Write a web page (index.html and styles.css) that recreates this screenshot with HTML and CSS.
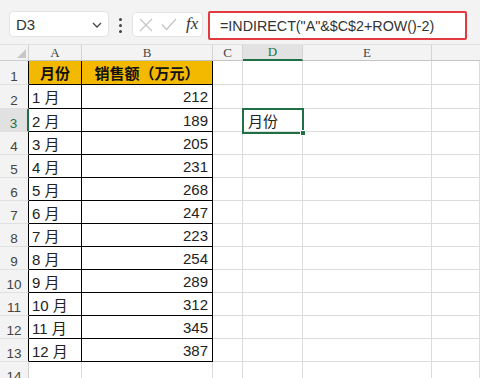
FILE: index.html
```html
<!DOCTYPE html>
<html lang="zh-CN">
<head>
<meta charset="utf-8">
<link rel="stylesheet" href="styles.css">
</head>
<body>
<div class="topbar">
  <div class="namebox">
    <span class="name">D3</span>
    <svg class="chev" width="10" height="6" viewBox="0 0 10 6"><path d="M1 1 L5 5 L9 1" fill="none" stroke="#444" stroke-width="1.3"/></svg>
  </div>
  <div class="dots"><i></i><i></i><i></i></div>
  <div class="fxbox">
    <svg width="14" height="14" viewBox="0 0 14 14"><path d="M1 1 L13 13 M13 1 L1 13" stroke="#c4c4c4" stroke-width="1.2" fill="none"/></svg>
    <svg width="16" height="13" viewBox="0 0 16 13"><path d="M1 6.5 L5.5 11.5 L15 1" stroke="#c4c4c4" stroke-width="1.2" fill="none"/></svg>
    <span class="fx">fx</span>
  </div>
  <div class="formula">=INDIRECT("A"&amp;$C$2+ROW()-2)</div>
</div>

<div class="sheet">
  <div class="c corner"><span class="tri"></span></div>
  <div class="c ch">A</div>
  <div class="c ch">B</div>
  <div class="c ch">C</div>
  <div class="c ch ch-sel">D</div>
  <div class="c ch">E</div>
  <div class="c ch ch-last"></div>

  <div class="c rh rh-t">1</div><div class="c t hd">月份</div><div class="c t hd">销售额（万元）</div><div class="c"></div><div class="c"></div><div class="c"></div><div class="c"></div>
  <div class="c rh rh-t">2</div><div class="c t">1 月</div><div class="c t num">212</div><div class="c"></div><div class="c"></div><div class="c"></div><div class="c"></div>
  <div class="c rh rh-sel">3</div><div class="c t">2 月</div><div class="c t num">189</div><div class="c"></div><div class="c sel-text">月份</div><div class="c"></div><div class="c"></div>
  <div class="c rh rh-t">4</div><div class="c t">3 月</div><div class="c t num">205</div><div class="c"></div><div class="c"></div><div class="c"></div><div class="c"></div>
  <div class="c rh rh-t">5</div><div class="c t">4 月</div><div class="c t num">231</div><div class="c"></div><div class="c"></div><div class="c"></div><div class="c"></div>
  <div class="c rh rh-t">6</div><div class="c t">5 月</div><div class="c t num">268</div><div class="c"></div><div class="c"></div><div class="c"></div><div class="c"></div>
  <div class="c rh rh-t">7</div><div class="c t">6 月</div><div class="c t num">247</div><div class="c"></div><div class="c"></div><div class="c"></div><div class="c"></div>
  <div class="c rh rh-t">8</div><div class="c t">7 月</div><div class="c t num">223</div><div class="c"></div><div class="c"></div><div class="c"></div><div class="c"></div>
  <div class="c rh rh-t">9</div><div class="c t">8 月</div><div class="c t num">254</div><div class="c"></div><div class="c"></div><div class="c"></div><div class="c"></div>
  <div class="c rh rh-t">10</div><div class="c t">9 月</div><div class="c t num">289</div><div class="c"></div><div class="c"></div><div class="c"></div><div class="c"></div>
  <div class="c rh rh-t">11</div><div class="c t">10 月</div><div class="c t num">312</div><div class="c"></div><div class="c"></div><div class="c"></div><div class="c"></div>
  <div class="c rh rh-t">12</div><div class="c t">11 月</div><div class="c t num">345</div><div class="c"></div><div class="c"></div><div class="c"></div><div class="c"></div>
  <div class="c rh rh-t">13</div><div class="c t">12 月</div><div class="c t num">387</div><div class="c"></div><div class="c"></div><div class="c"></div><div class="c"></div>
  <div class="c rh">14</div><div class="c"></div><div class="c"></div><div class="c"></div><div class="c"></div><div class="c"></div><div class="c"></div>

  <div class="selbox"><span class="handle"></span></div>
</div>
</body>
</html>
```

FILE: styles.css
```css
* { box-sizing: border-box; }
html, body { margin: 0; padding: 0; }
body {
  width: 480px;
  height: 378px;
  overflow: hidden;
  background: #fff;
  font-family: "Liberation Sans", "Noto Sans CJK SC", sans-serif;
  color: #222;
}

.topbar {
  height: 45px;
  background: #f3f3f3;
  display: flex;
  align-items: flex-start;
  padding: 11px 0 0 9px;
  border-bottom: 1px solid #e2e2e2;
}

.namebox {
  width: 100px;
  height: 26px;
  background: #fff;
  border: 1px solid #e4e4e4;
  border-radius: 4px;
  display: flex;
  align-items: center;
  justify-content: space-between;
  padding: 0 6px 0 6px;
}
.name { font-size: 15px; color: #333; }
.chev { margin-top: 1px; }

.dots {
  width: 3px;
  margin: 7px 10px 0 10px;
  display: flex;
  flex-direction: column;
  gap: 3px;
}
.dots i {
  display: block;
  width: 3px;
  height: 3px;
  border-radius: 50%;
  background: #444;
}

.fxbox {
  width: 71px;
  height: 25px;
  margin-top: 1px;
  background: #fff;
  border: 1px solid #e4e4e4;
  border-radius: 4px;
  display: flex;
  align-items: center;
  padding-left: 6px;
  gap: 8px;
}
.fx {
  font-family: "Liberation Serif", serif;
  font-style: italic;
  font-size: 17px;
  color: #333;
  margin-left: 1px;
  margin-top: -2px;
}

.formula {
  width: 259px;
  height: 29px;
  margin-left: 5px;
  background: #fff;
  border: 2px solid #e0393e;
  border-radius: 2px;
  display: flex;
  align-items: center;
  padding-left: 10px;
  font-size: 14.3px;
  color: #333;
  white-space: nowrap;
}

.sheet {
  position: relative;
  display: grid;
  grid-template-columns: 29px 53px 131px 30px 60px 129px 1fr;
  grid-template-rows: 16px 24px 24px repeat(11, 23px) 23px;
}

.c {
  border-right: 1px solid #dcdcdc;
  border-bottom: 1px solid #dcdcdc;
  display: flex;
  align-items: center;
  font-size: 15px;
  padding: 0 3px;
  white-space: nowrap;
}

.corner {
  background: #f3f3f3;
  border-right: 1px solid #cfcfcf;
  border-bottom: 1px solid #cfcfcf;
  position: relative;
}
.tri {
  position: absolute;
  right: 2px;
  bottom: 2px;
  width: 0;
  height: 0;
  border-left: 9px solid transparent;
  border-bottom: 9px solid #c7c7c7;
}

.ch {
  background: #f3f3f3;
  border-right: 1px solid #d4d4d4;
  border-bottom: 1px solid #c4c4c4;
  justify-content: center;
  font-family: "Liberation Serif", serif;
  font-size: 13px;
  color: #444;
}
.ch-sel {
  background: #e2e2e2;
  border-bottom: 2px solid #1f7145;
  color: #1f7145;
}
.ch-last { border-right: none; }

.rh {
  background: #f3f3f3;
  border-right: 1px solid #cfcfcf;
  border-bottom: 1px solid #e0e0e0;
  justify-content: center;
  align-items: flex-end;
  padding-bottom: 0;
  font-size: 13.5px;
  color: #444;
}
.rh-t { border-right: 1px solid #000; }
.rh-sel {
  background: #e1e1e1;
  color: #1f7145;
  border-right: 2px solid #1f7145;
}

.t {
  border-right: 1px solid #000;
  border-bottom: 1px solid #000;
  color: #222;
}
.hd {
  background: #f3b800;
  font-weight: bold;
  justify-content: center;
  font-family: "Noto Sans CJK SC", sans-serif;
  color: #111;
}
.num { justify-content: flex-end; padding-right: 4px; }

.sel-text { padding-left: 5px; }

.selbox {
  position: absolute;
  left: 242px;
  top: 63px;
  width: 62px;
  height: 26px;
  border: 2px solid #1f7145;
  pointer-events: none;
}
.handle {
  position: absolute;
  right: -4px;
  bottom: -4px;
  width: 6px;
  height: 6px;
  background: #1f7145;
  border: 1px solid #fff;
}
```
